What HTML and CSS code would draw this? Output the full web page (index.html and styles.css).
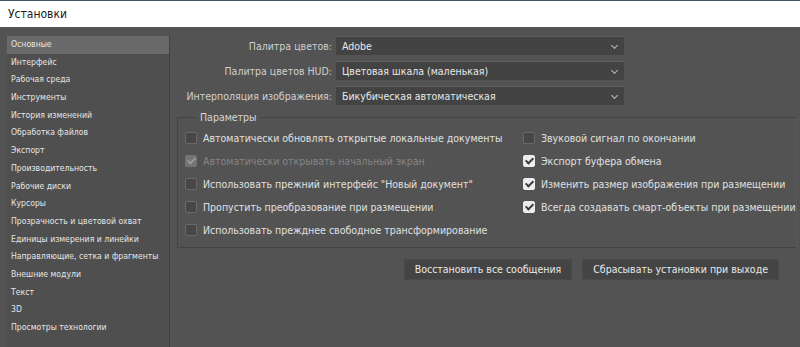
FILE: index.html
```html
<!DOCTYPE html>
<html lang="ru">
<head>
    <meta charset="UTF-8">
    <title>Установки</title>
    <link rel="stylesheet" href="styles.css">
</head>
<body>
<div class="titlebar">Установки</div>
<div class="window">
    <ul class="sidebar">
        <li class="active">Основные</li>
        <li>Интерфейс</li>
        <li>Рабочая среда</li>
        <li>Инструменты</li>
        <li>История изменений</li>
        <li>Обработка файлов</li>
        <li>Экспорт</li>
        <li>Производительность</li>
        <li>Рабочие диски</li>
        <li>Курсоры</li>
        <li>Прозрачность и цветовой охват</li>
        <li>Единицы измерения и линейки</li>
        <li>Направляющие, сетка и фрагменты</li>
        <li>Внешние модули</li>
        <li>Текст</li>
        <li>3D</li>
        <li>Просмотры технологии</li>
    </ul>

    <div class="content">
        <div class="field">
            <label>Палитра цветов:</label>
            <div class="select">Adobe<span class="chev"></span></div>
        </div>
        <div class="field">
            <label>Палитра цветов HUD:</label>
            <div class="select">Цветовая шкала (маленькая)<span class="chev"></span></div>
        </div>
        <div class="field">
            <label>Интерполяция изображения:</label>
            <div class="select">Бикубическая автоматическая<span class="chev"></span></div>
        </div>

        <fieldset class="params">
            <legend>Параметры</legend>
            <div class="grid">
                <div class="check"><span class="box"></span>Автоматически обновлять открытые локальные документы</div>
                <div class="check"><span class="box"></span>Звуковой сигнал по окончании</div>
                <div class="check disabled"><span class="box on"></span>Автоматически открывать начальный экран</div>
                <div class="check"><span class="box on"></span>Экспорт буфера обмена</div>
                <div class="check"><span class="box"></span>Использовать прежний интерфейс "Новый документ"</div>
                <div class="check"><span class="box on"></span>Изменить размер изображения при размещении</div>
                <div class="check"><span class="box"></span>Пропустить преобразование при размещении</div>
                <div class="check"><span class="box on"></span>Всегда создавать смарт-объекты при размещении</div>
                <div class="check"><span class="box"></span>Использовать прежднее свободное трансформирование</div>
            </div>
        </fieldset>

        <div class="buttons">
            <button type="button">Восстановить все сообщения</button>
            <button type="button">Сбрасывать установки при выходе</button>
        </div>
    </div>
</div>
</body>
</html>
```

FILE: styles.css
```css
body {
    margin: 0;
    background-color: #535353;
    font-family: "DejaVu Sans Condensed", "Liberation Sans", sans-serif;
    color: #dcdcdc;
    overflow: hidden;
}

.titlebar {
    height: 26px;
    line-height: 26px;
    background-color: #ffffff;
    border-top: 1px solid #3c5966;
    padding-left: 8px;
    font-size: 12px;
    color: #1a1a1a;
}

.window {
    display: flex;
    padding: 8px 0 0 7px;
}

.sidebar {
    list-style: none;
    margin: 0;
    padding: 1px 0 0 0;
    width: 162px;
    flex-shrink: 0;
    height: 320px;
    background-color: #4f4f4f;
    border-right: 1px solid #414141;
}

.sidebar li {
    height: 17.7px;
    line-height: 17.7px;
    padding-left: 4px;
    font-size: 8.6px;
    color: #e6e6e6;
    white-space: nowrap;
}

.sidebar li.active {
    background-color: #6a6a6a;
}

.content {
    flex: 1;
    min-width: 0;
    padding-left: 7px;
    padding-right: 3px;
}

.field {
    display: flex;
    align-items: center;
    margin-bottom: 6px;
}

.field:first-child {
    margin-top: 1px;
}

.field label {
    width: 155px;
    flex-shrink: 0;
    text-align: right;
    font-size: 10.5px;
    color: #d0d0d0;
    padding-right: 4px;
    white-space: nowrap;
}

.select {
    position: relative;
    width: 282px;
    height: 18px;
    line-height: 18px;
    padding-left: 6px;
    background-color: #434343;
    border-top: 1px solid #5e5e5e;
    font-size: 10.5px;
    color: #e8e8e8;
}

.chev {
    position: absolute;
    right: 7px;
    top: 6px;
    width: 4px;
    height: 4px;
    border-right: 1px solid #bcbcbc;
    border-bottom: 1px solid #bcbcbc;
    transform: rotate(45deg);
}

.params {
    min-width: 0;
    margin: 6px 0 0 0;
    padding: 3px 0 5px 7px;
    border: 1px solid #444444;
    border-right-color: #5a5a5a;
}

.params legend {
    margin-left: 12px;
    padding: 0 3px;
    font-size: 10.5px;
    color: #d6d6d6;
}

.grid {
    display: grid;
    grid-template-columns: 338px auto;
}

.check {
    display: flex;
    align-items: center;
    height: 23.2px;
    font-size: 10.5px;
    color: #e0e0e0;
    white-space: nowrap;
}

.check.disabled {
    color: #858585;
}

.box {
    width: 10px;
    height: 10px;
    flex-shrink: 0;
    margin-right: 6px;
    border: 1px solid #6a6a6a;
    border-radius: 2px;
    background-color: #474747;
    position: relative;
}

.box.on {
    background-color: #ececec;
    border-color: #ececec;
}

.box.on::after {
    content: "";
    position: absolute;
    left: 3px;
    top: 0px;
    width: 3px;
    height: 6px;
    border-right: 2px solid #3a3a3a;
    border-bottom: 2px solid #3a3a3a;
    transform: rotate(45deg);
}

.check.disabled .box.on {
    background-color: #737373;
    border-color: #737373;
}

.check.disabled .box.on::after {
    border-color: #9a9a9a;
}

.buttons {
    display: flex;
    justify-content: flex-end;
    gap: 10px;
    margin-top: 11px;
    padding-right: 18px;
}

button {
    height: 21px;
    padding: 0 10px;
    background-color: #444444;
    border: 1px solid #4a4a4a;
    color: #e8e8e8;
    font-family: "DejaVu Sans Condensed", "Liberation Sans", sans-serif;
    font-size: 10.5px;
}
```
